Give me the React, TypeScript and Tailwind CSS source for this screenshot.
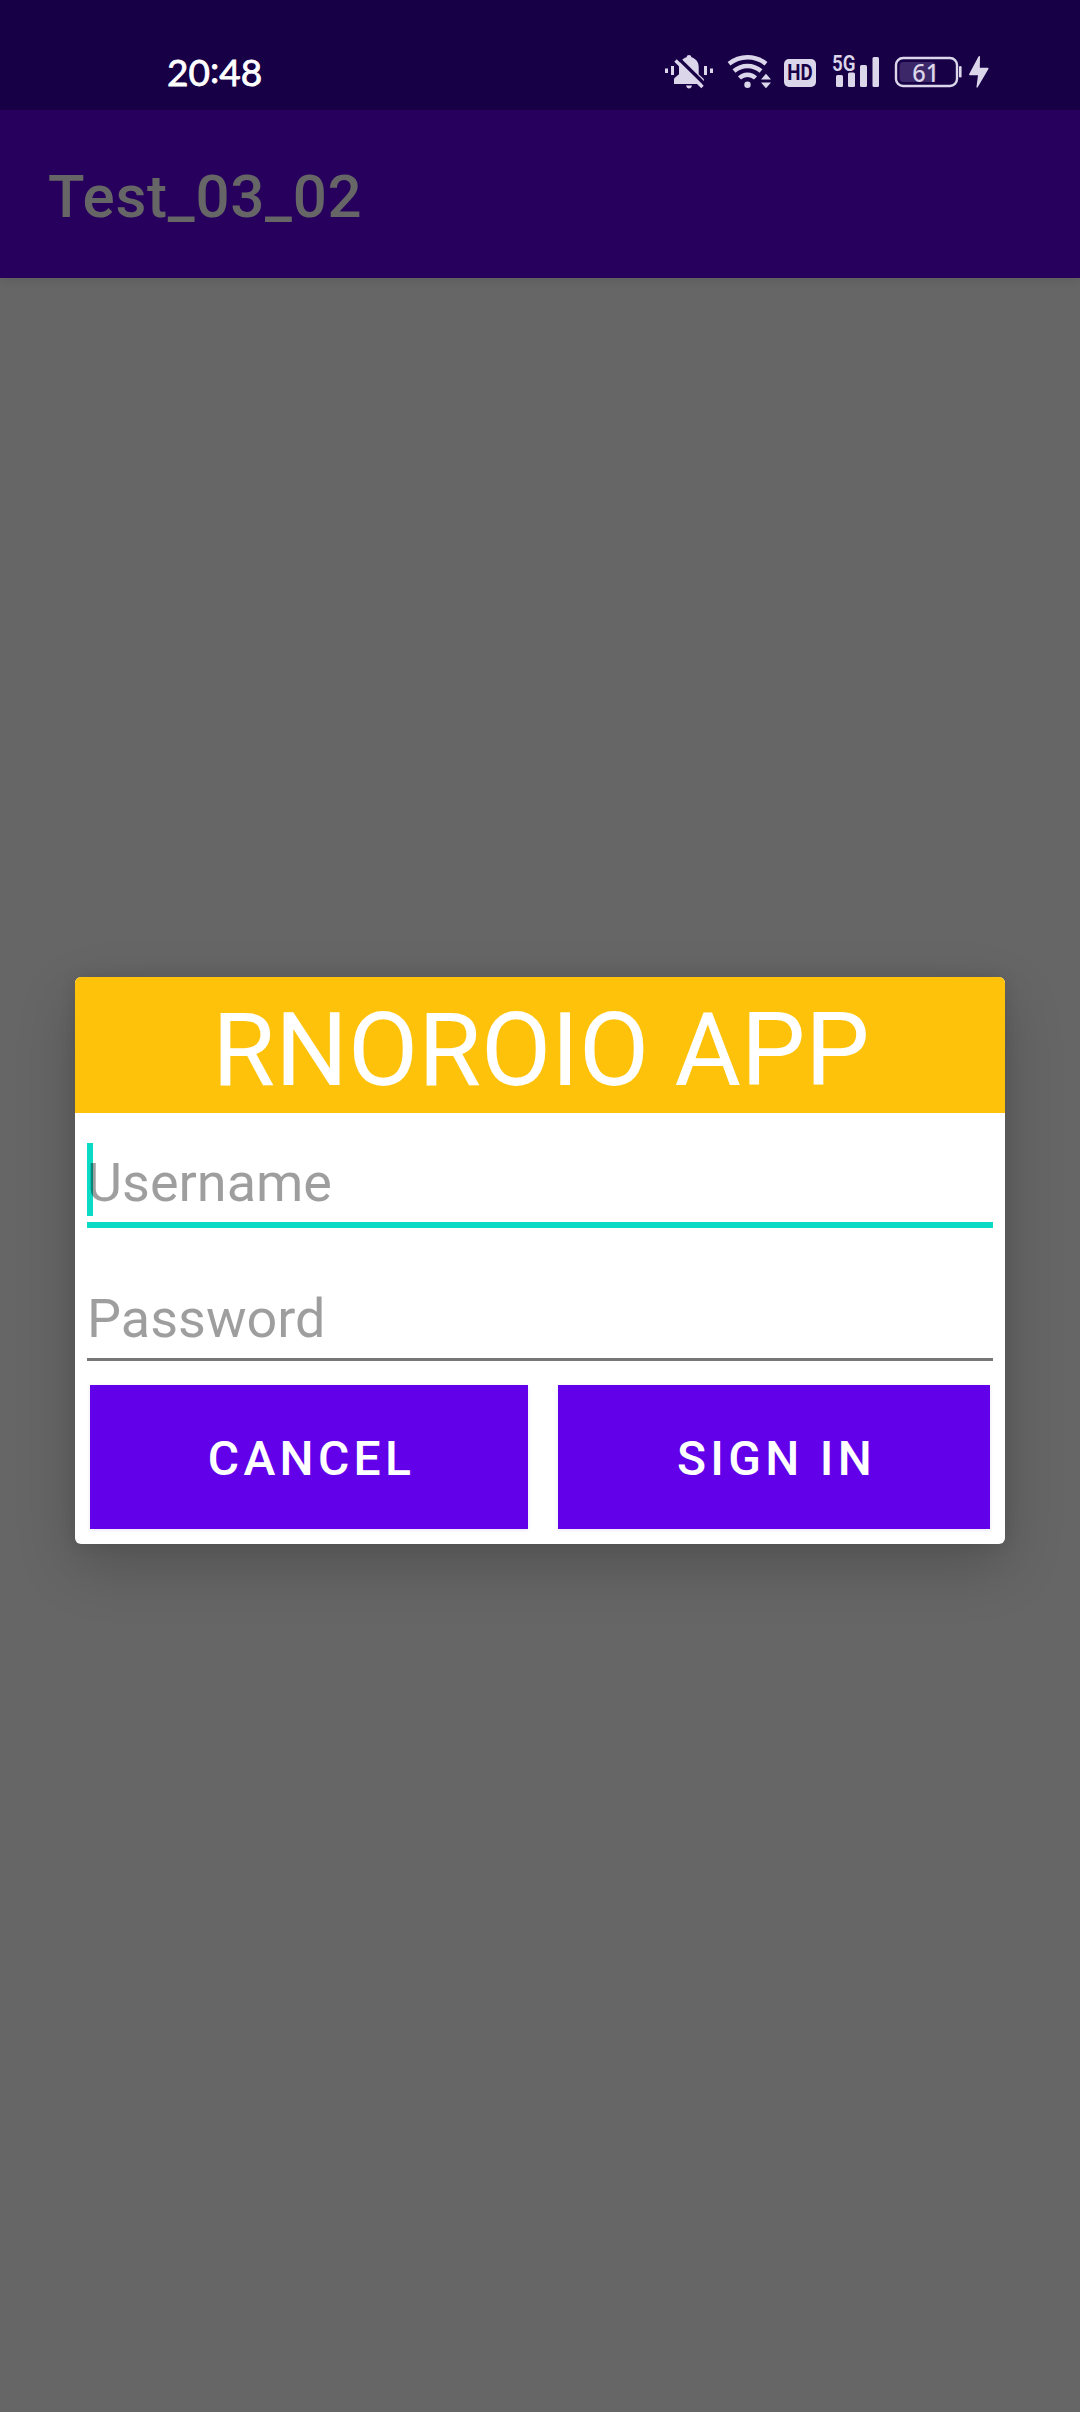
const INK = '#dcd6ea';

function BellMutedIcon() {
  return (
    <svg width="48" height="36" viewBox="665 54 48 36" fill={INK} className="shrink-0">
      <rect x="665" y="68.5" width="3" height="4.5" />
      <rect x="671" y="66" width="3" height="9" />
      <rect x="704" y="66" width="3" height="9" />
      <rect x="710" y="68.5" width="3" height="4.5" />
      <path d="M689 55c1.400 0 2.200.9 2.400 2.200 4.600 1.300 7.300 5 7.300 9.600v7.400l4.500 4.300c.7.700.8 1 .8 2V84H674v-4.500c0-.8.3-1.300.8-1.800l4.200-3.500V66.800c0-4.600 3-8.300 7.600-9.600.2-1.300 1-2.200 2.400-2.200z" />
      <path d="M686 85.500h6c-.5 1.900-1.500 2.900-3 2.900s-2.500-1-3-2.900z" />
      <path d="M677.500 57.500l28.500 28" stroke="#180047" strokeWidth="3.500" />
      <path d="M675.500 60.500l27 26.500" stroke={INK} strokeWidth="3.400" />
    </svg>
  );
}

function WifiIcon() {
  return (
    <svg width="46" height="36" viewBox="726 54 46 36" fill="none" stroke={INK} strokeWidth="4.400" className="shrink-0">
      <path d="M729 63.800a29.500 29.500 0 0 1 37 0" />
      <path d="M734 71a20.500 20.500 0 0 1 27 0" />
      <path d="M739.500 78a11.500 11.500 0 0 1 16 0" />
      <circle cx="747.500" cy="84.700" r="3.200" fill={INK} stroke="none" />
      <path d="M766 73.800l5 5.700h-10zM766 88.200l5-5.700h-10z" fill={INK} stroke="none" />
    </svg>
  );
}

function SignalIcon() {
  return (
    <svg width="48" height="36" viewBox="832 54 48 36" fill={INK} className="shrink-0 overflow-visible">
      <text x="832" y="70.500" fontFamily="Roboto, sans-serif" fontWeight="600" fontSize="21.500" textLength="23.500" lengthAdjust="spacingAndGlyphs">5G</text>
      <rect x="836" y="75" width="7" height="12" rx="1.500" />
      <rect x="848" y="72.500" width="7" height="14.500" rx="1.500" />
      <rect x="860" y="65" width="7" height="22" rx="1.500" />
      <rect x="872.500" y="57" width="6.500" height="30" rx="1.500" />
    </svg>
  );
}

function BatteryIcon() {
  return (
    <svg width="68" height="36" viewBox="894 54 68 36" fill={INK} className="shrink-0">
      <rect x="896" y="58" width="61" height="28" rx="7" fill="none" stroke={INK} strokeWidth="2.400" />
      <rect x="899.500" y="62" width="36" height="20" rx="4" fill="#3c2768" />
      <rect x="959" y="66" width="2.600" height="11.500" rx="1.300" />
      <text x="912.200" y="81.500" fontFamily="'Noto Sans', sans-serif" fontWeight="500" fontSize="25" textLength="27" lengthAdjust="spacingAndGlyphs">61</text>
    </svg>
  );
}

function BoltIcon() {
  return (
    <svg width="20" height="36" viewBox="969 54 20 36" fill={INK} className="shrink-0">
      <path d="M978.500 56.500l-9.300 17.500c-.4.800 0 1.300.8 1.300h8l-1.500 11.500c-.1 1 .7 1.200 1.200.4l10.700-18.200c.4-.8 0-1.300-.8-1.300h-7.800l.2-10.700c0-1.100-.9-1.300-1.300-.5z" />
    </svg>
  );
}

function StatusBar() {
  return (
    <header className="flex h-[110px] items-start bg-[#180047] pl-[167px] pt-[54px]">
      <time className="h-9 w-[498px] font-['Lato',sans-serif] text-[37px] leading-9 text-white [-webkit-text-stroke:0.8px_white]">
        20<span className="relative -top-[3px]">:</span>48
      </time>
      <BellMutedIcon />
      <div className="ml-[13px]"><WifiIcon /></div>
      <div className="mt-[5px] ml-3 flex h-7 w-8 items-center justify-center rounded-[5px] bg-[#dcd6ea] font-['Roboto'] text-[22px] leading-7 font-bold text-[#180047]">
        <span className="scale-x-[0.85]">HD</span>
      </div>
      <div className="ml-4"><SignalIcon /></div>
      <div className="ml-[14px]"><BatteryIcon /></div>
      <div className="ml-[7px]"><BoltIcon /></div>
    </header>
  );
}

function Field({ label, focused = false }: { label: string; focused?: boolean }) {
  return (
    <div className={focused ? 'relative h-[85px] border-b-6 border-[#0bdac4]' : 'relative h-[82px] border-b-3 border-[#757877]'}>
      {focused && <i className="absolute top-0 left-0 h-[73px] w-1.5 bg-[#0bdac4]" />}
      <span className="relative block pt-2 text-[54px] leading-[64px] text-black/38">{label}</span>
    </div>
  );
}

function DialogButton({ label, width }: { label: string; width: string }) {
  return (
    <button type="button" className={`${width} h-36 bg-[#6200ea] pt-[3px] pl-[5px] text-[48px] font-medium tracking-[4.3px] text-white shadow-[0_1px_4px_rgba(80,0,160,0.12)]`}>
      {label}
    </button>
  );
}

function Dialog() {
  return (
    <section className="h-[567px] w-[930px] overflow-hidden rounded-[6px] bg-white shadow-[0_22px_60px_rgba(0,0,0,0.2),0_0_16px_rgba(0,0,0,0.1)]">
      <h2 className="h-[136px] bg-[#ffc20a] pt-[5px] pl-[2px] text-center text-[102px] leading-[136px] text-white">RNOROIO APP</h2>
      <form className="px-3 pt-[30px]">
        <Field label="Username" focused />
        <div className="mt-[51px]"><Field label="Password" /></div>
      </form>
      <div className="flex gap-[30px] px-[15px] pt-6">
        <DialogButton label="CANCEL" width="w-[438px]" />
        <DialogButton label="SIGN IN" width="w-[432px]" />
      </div>
    </section>
  );
}

export default function App() {
  return (
    <div className="relative flex h-[2412px] w-[1080px] flex-col overflow-hidden bg-[#666666] font-['Roboto',sans-serif]">
      <StatusBar />
      <div className="flex h-[168px] shrink-0 items-center bg-[#27005e] pl-12 shadow-[0_2px_10px_rgba(0,0,0,0.1)]">
        <h1 className="pt-[5px] text-[60px] leading-[70px] font-medium tracking-[0.75px] text-[#666666]">Test_03_02</h1>
      </div>
      <div className="absolute inset-0 flex items-center justify-center pt-[109px]">
        <Dialog />
      </div>
    </div>
  );
}
